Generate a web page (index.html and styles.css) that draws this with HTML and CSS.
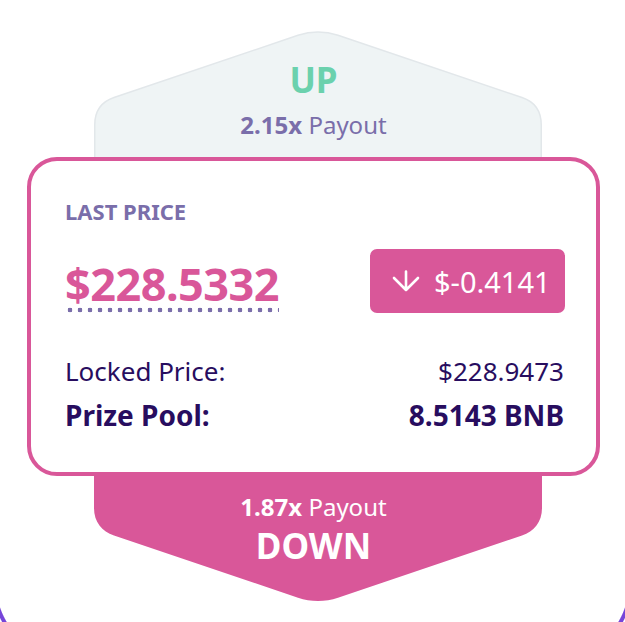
FILE: index.html
```html
<!DOCTYPE html>
<html>
<head>
<meta charset="utf-8">
<link rel="stylesheet" href="styles.css">
</head>
<body>
<div class="frame">
  <div class="round">
    <div class="arrow up">
      <svg class="shape" width="448" height="126" viewBox="0 0 448 126">
        <path d="M0.75 126 L0.75 94 C0.75 80 8 70.5 20 66.5 L204 4.3 C217 0 231 0 244 4.3 L428 66.5 C440 70.5 447.25 80 447.25 94 L447.25 126" fill="#EFF4F5" stroke="#E2E7EA" stroke-width="1.5"/>
      </svg>
      <div class="arrow-text">
        <div class="dir up-dir">UP</div>
        <div class="payout"><b>2.15x</b> Payout</div>
      </div>
    </div>
    <div class="card">
      <div class="label">LAST PRICE</div>
      <div class="price-row">
        <span class="price">$228.5332</span>
        <span class="badge">
          <svg class="down-icon" width="28" height="22" viewBox="0 0 28 22"><path d="M14 1.5 V20 M2 8 L14 20 L26 8" fill="none" stroke="#fff" stroke-width="2.6" stroke-linecap="round" stroke-linejoin="round"/></svg>
          <span>$-0.4141</span>
        </span>
      </div>
      <div class="row locked"><span>Locked Price:</span><span>$228.9473</span></div>
      <div class="row pool"><span>Prize Pool:</span><span>8.5143 BNB</span></div>
    </div>
    <div class="arrow down">
      <svg class="shape" width="448" height="126" viewBox="0 0 448 126">
        <path d="M0 0 L0 32 C0 46 8 55.5 20 59.5 L204 121.7 C217 126 231 126 244 121.7 L428 59.5 C440 55.5 448 46 448 32 L448 0 Z" fill="#D95799"/>
      </svg>
      <div class="arrow-text">
        <div class="payout white"><b>1.87x</b> Payout</div>
        <div class="dir down-dir">DOWN</div>
      </div>
    </div>
  </div>
</div>
</body>
</html>
```
FILE: styles.css
```css
html, body {
  margin: 0;
  padding: 0;
  background: #ffffff;
  overflow: hidden;
  height: 622px;
}
body {
  font-family: "Noto Sans", "Liberation Sans", sans-serif;
  color: #280D5F;
}
.frame {
  width: 625px;
  height: 622px;
  background-color: #ffffff;
  background-image:
    radial-gradient(circle at 72px 2px, transparent 75.5px, #7645D9 76.5px, #7645D9 79.5px, transparent 80.5px),
    radial-gradient(circle at -32px 2px, transparent 75.5px, #7645D9 76.5px, #7645D9 79.5px, transparent 80.5px);
  background-size: 40px 41px, 40px 41px;
  background-position: 0 581px, 585px 581px;
  background-repeat: no-repeat;
}
.round {
  margin-left: 27px;
  width: 573px;
  display: flex;
  flex-direction: column;
  padding-top: 31px;
}
.arrow {
  display: grid;
  width: 448px;
  height: 126px;
  margin-left: 67px;
}
.shape, .arrow-text {
  grid-area: 1 / 1;
}
.shape {
  display: block;
}
.arrow-text {
  display: flex;
  flex-direction: column;
  align-items: center;
  margin-left: -9px;
}
.up .arrow-text {
  padding-top: 29px;
}
.down .arrow-text {
  padding-top: 14px;
}
.dir {
  font-size: 35px;
  font-weight: 700;
  line-height: 40px;
}
.up-dir {
  color: #6BD1AD;
}
.down-dir {
  color: #ffffff;
  margin-top: 2px;
}
.payout {
  font-size: 24px;
  line-height: 34px;
  color: #7A6EAA;
  margin-top: 8px;
}
.payout b {
  font-weight: 700;
}
.payout.white {
  color: #ffffff;
  margin-top: 0;
}
.card {
  box-sizing: border-box;
  height: 319px;
  border: 4px solid #D95799;
  border-radius: 30px;
  background: #ffffff;
  padding: 38px 31px 0 34px;
}
.label {
  font-size: 22px;
  font-weight: 700;
  line-height: 24px;
  color: #7A6EAA;
}
.price-row {
  margin-top: 26px;
  height: 64px;
  display: flex;
  align-items: center;
  justify-content: space-between;
}
.price {
  font-size: 45px;
  font-weight: 700;
  line-height: 50px;
  color: #D95799;
  padding-bottom: 4px;
  margin-top: 10px;
  letter-spacing: -0.5px;
  background-image: radial-gradient(circle, #7A6EAA 2.1px, transparent 2.6px);
  background-size: 10px 6px;
  background-repeat: repeat-x;
  background-position: 0 100%;
}
.badge {
  box-sizing: border-box;
  width: 195px;
  height: 64px;
  background: #D95799;
  border-radius: 7px;
  color: #ffffff;
  display: flex;
  align-items: center;
  padding-left: 22px;
  gap: 14px;
  font-size: 29px;
}
.down-icon {
  display: block;
}
.row {
  display: flex;
  justify-content: space-between;
  line-height: 30px;
  padding-right: 1px;
}
.locked {
  margin-top: 43px;
  font-size: 26px;
}
.pool {
  margin-top: 14px;
  font-size: 28px;
  font-weight: 700;
}
```
